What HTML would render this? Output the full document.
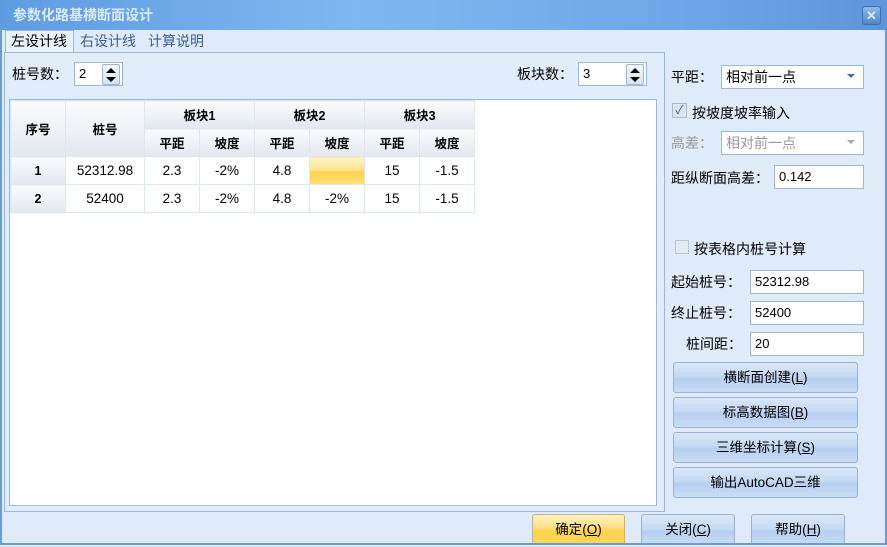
<!DOCTYPE html>
<html><head><meta charset="utf-8"><style>
*{box-sizing:border-box;margin:0;padding:0}
body{width:887px;height:547px;overflow:hidden;font-family:"Liberation Sans","Noto Sans CJK SC",sans-serif;font-size:13px;color:#000;background:#dfeaf8;position:relative}
.a{position:absolute}
.win{left:0;top:0;width:887px;height:547px;border:2px solid #6e9bd3;background:#dfebf9}
.title{left:0;top:0;width:887px;height:30px;background:linear-gradient(90deg,#5f9be0,#7db9f0 40%,#6aa6e6 80%,#5c95d8);color:#dbe9f8;font-weight:bold;font-size:14px;line-height:30px;padding-left:13px}
.close{left:862px;top:6px;width:19px;height:19px;background:linear-gradient(#8fb8e6,#4f85c8);border:1px solid #3d6fae;border-radius:3px;color:#dfe9f6;font-size:13px;line-height:17px;text-align:center;font-weight:bold}
.inp{background:#fff;border:1px solid #9bb8dc;height:24px;line-height:22px;padding-left:4px}
.btn{border:1px solid #9bb2d6;border-radius:3px;background:linear-gradient(#d9e7f8,#c6daf3 45%,#b7cff0 55%,#c9dcf4);text-align:center;line-height:30px;font-size:13.5px}
table{border-collapse:collapse;position:absolute;left:10px;top:100px;table-layout:fixed}
td{border:1px solid #dde8f5;text-align:center;height:28px;font-size:13.5px}
th{border:1px solid #e0e6ee;background:linear-gradient(#fafbfc,#e3e8ef);font-size:12.5px;font-weight:bold;height:28px}
.spin{position:absolute;right:2px;top:1px;width:18px;height:21px;border:1px solid #9bb8dc;border-radius:2px;background:linear-gradient(#f4f8fd,#d5e3f4)}
.dd{position:absolute;right:8px;top:8px;width:0;height:0;border-left:4px solid transparent;border-right:4px solid transparent;border-top:4px solid #4f6e9b}
</style></head><body>
<div class="a win"></div>
<div class="a title">参数化路基横断面设计</div>
<div class="a close">✕</div>
<div class="a" style="left:5px;top:30px;width:69px;height:23px;background:#e9f2fc;border:1px solid #9bb8dc;border-bottom:none;font-size:14px;line-height:21px;padding-left:5px">左设计线</div>
<div class="a" style="left:80px;top:31px;font-size:14px;color:#3c5f8f;line-height:21px">右设计线</div>
<div class="a" style="left:148px;top:31px;font-size:14px;color:#3c5f8f;line-height:21px">计算说明</div>
<div class="a" style="left:4px;top:52px;width:661px;height:460px;border:1px solid #9bb8dc;background:#e2edfb"></div>
<div class="a" style="left:12px;top:64px;font-size:14px">桩号数：</div>
<div class="a inp" style="left:74px;top:62px;width:49px">2<div class="spin"><svg width="16" height="19" style="position:absolute;left:0;top:0"><path d="M3 8 L8 3 L13 8Z M3 12 L13 12 L8 17Z" fill="#000"/></svg></div></div>
<div class="a" style="left:517px;top:64px;font-size:14px">板块数：</div>
<div class="a inp" style="left:578px;top:62px;width:69px">3<div class="spin"><svg width="16" height="19" style="position:absolute;left:0;top:0"><path d="M3 8 L8 3 L13 8Z M3 12 L13 12 L8 17Z" fill="#000"/></svg></div></div>
<div class="a" style="left:9px;top:99px;width:648px;height:407px;background:#fff;border:1px solid #9bb8dc"></div>
<table style="width:464px">
<colgroup><col style="width:55px"><col style="width:79px"><col style="width:55px"><col style="width:55px"><col style="width:55px"><col style="width:55px"><col style="width:55px"><col style="width:55px"></colgroup>
<tr><th rowspan="2">序号</th><th rowspan="2">桩号</th><th colspan="2">板块1</th><th colspan="2">板块2</th><th colspan="2">板块3</th></tr>
<tr><th>平距</th><th>坡度</th><th>平距</th><th>坡度</th><th>平距</th><th>坡度</th></tr>
<tr><th>1</th><td>52312.98</td><td>2.3</td><td>-2%</td><td>4.8</td><td style="background:linear-gradient(#fff3c8,#ffe58f 45%,#ffd24a 55%,#ffe07a);border:1px dotted #555"></td><td>15</td><td>-1.5</td></tr>
<tr><th>2</th><td>52400</td><td>2.3</td><td>-2%</td><td>4.8</td><td>-2%</td><td>15</td><td>-1.5</td></tr>
</table>
<div class="a" style="left:671px;top:67px;font-size:14px">平距：</div>
<div class="a inp" style="left:721px;top:65px;width:143px;font-size:14px">相对前一点<span class="dd"></span></div>
<div class="a" style="left:672px;top:103px;width:15px;height:15px;border:1px solid #aab8c8;background:#dde5ee;color:#4a5a70;font-size:12px;line-height:13px;text-align:center">✓</div>
<div class="a" style="left:692px;top:103px;font-size:14px">按坡度坡率输入</div>
<div class="a" style="left:671px;top:133px;font-size:14px;color:#999">高差：</div>
<div class="a inp" style="left:721px;top:131px;width:143px;font-size:14px;color:#999">相对前一点<span class="dd" style="border-top-color:#aaa"></span></div>
<div class="a" style="left:671px;top:168px;font-size:14px">距纵断面高差：</div>
<div class="a inp" style="left:774px;top:165px;width:90px">0.142</div>
<div class="a" style="left:675px;top:240px;width:14px;height:14px;border:1px solid #b8c4d2;background:#e4eaf0"></div>
<div class="a" style="left:694px;top:239px;font-size:14px">按表格内桩号计算</div>
<div class="a" style="left:671px;top:272px;font-size:14px">起始桩号：</div>
<div class="a inp" style="left:750px;top:270px;width:114px">52312.98</div>
<div class="a" style="left:671px;top:303px;font-size:14px">终止桩号：</div>
<div class="a inp" style="left:750px;top:301px;width:114px">52400</div>
<div class="a" style="left:686px;top:334px;font-size:14px">桩间距：</div>
<div class="a inp" style="left:750px;top:332px;width:114px">20</div>
<div class="a btn" style="left:673px;top:362px;width:185px;height:31px">横断面创建(<u>L</u>)</div>
<div class="a btn" style="left:673px;top:397px;width:185px;height:31px">标高数据图(<u>B</u>)</div>
<div class="a btn" style="left:673px;top:432px;width:185px;height:31px">三维坐标计算(<u>S</u>)</div>
<div class="a btn" style="left:673px;top:467px;width:185px;height:31px">输出AutoCAD三维</div>
<div class="a btn" style="left:532px;top:514px;width:93px;height:32px;background:linear-gradient(#fff0c0,#ffe08a 40%,#ffd24a 55%,#ffd75a);border-color:#c9b27a">确定(<u>O</u>)</div>
<div class="a btn" style="left:641px;top:514px;width:94px;height:32px">关闭(<u>C</u>)</div>
<div class="a btn" style="left:751px;top:514px;width:94px;height:32px">帮助(<u>H</u>)</div>
<div class="a" style="left:0;top:543px;width:887px;height:4px;border-top:2px solid #6e9bd3;background:#dfebf9"></div>
</body></html>
